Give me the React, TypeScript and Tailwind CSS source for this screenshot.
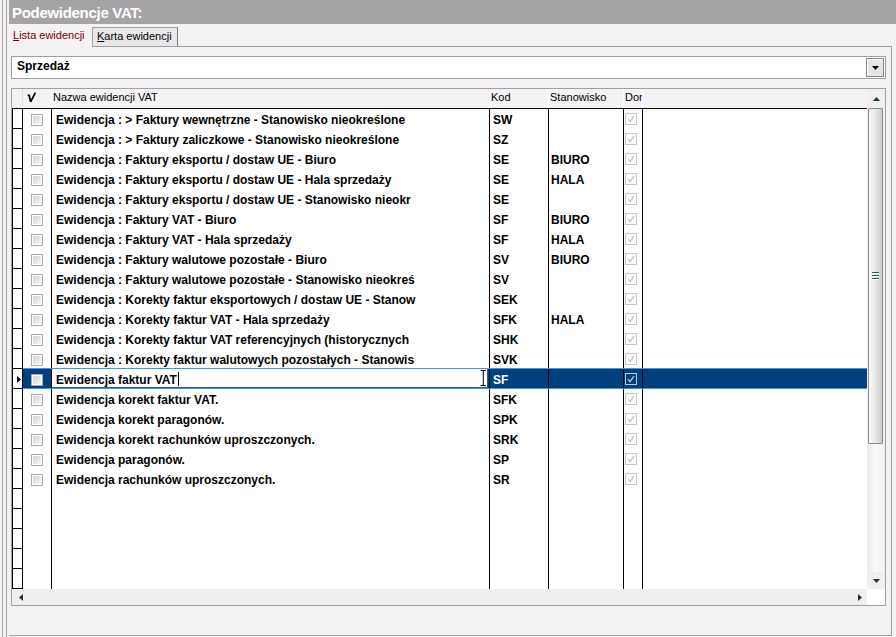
import React from "react";

type Row = { name: string; kod: string; stan: string };

const rows: Row[] = [
  { name: "Ewidencja : > Faktury wewnętrzne - Stanowisko nieokreślone", kod: "SW", stan: "" },
  { name: "Ewidencja : > Faktury zaliczkowe - Stanowisko nieokreślone", kod: "SZ", stan: "" },
  { name: "Ewidencja : Faktury eksportu / dostaw UE - Biuro", kod: "SE", stan: "BIURO" },
  { name: "Ewidencja : Faktury eksportu / dostaw UE - Hala sprzedaży", kod: "SE", stan: "HALA" },
  { name: "Ewidencja : Faktury eksportu / dostaw UE - Stanowisko nieokr", kod: "SE", stan: "" },
  { name: "Ewidencja : Faktury VAT - Biuro", kod: "SF", stan: "BIURO" },
  { name: "Ewidencja : Faktury VAT - Hala sprzedaży", kod: "SF", stan: "HALA" },
  { name: "Ewidencja : Faktury walutowe pozostałe - Biuro", kod: "SV", stan: "BIURO" },
  { name: "Ewidencja : Faktury walutowe pozostałe - Stanowisko nieokreś", kod: "SV", stan: "" },
  { name: "Ewidencja : Korekty faktur eksportowych / dostaw UE - Stanow", kod: "SEK", stan: "" },
  { name: "Ewidencja : Korekty faktur VAT - Hala sprzedaży", kod: "SFK", stan: "HALA" },
  { name: "Ewidencja : Korekty faktur VAT referencyjnych (historycznych", kod: "SHK", stan: "" },
  { name: "Ewidencja : Korekty faktur walutowych pozostałych - Stanowis", kod: "SVK", stan: "" },
  { name: "Ewidencja faktur VAT", kod: "SF", stan: "" },
  { name: "Ewidencja korekt faktur VAT.", kod: "SFK", stan: "" },
  { name: "Ewidencja korekt paragonów.", kod: "SPK", stan: "" },
  { name: "Ewidencja korekt rachunków uproszczonych.", kod: "SRK", stan: "" },
  { name: "Ewidencja paragonów.", kod: "SP", stan: "" },
  { name: "Ewidencja rachunków uproszczonych.", kod: "SR", stan: "" },
];

const SELECTED = 13;
const TOTAL_ROWS = 24;

function GrayBox() {
  return (
    <div className="w-[12px] h-[12px] border border-[#a9a9a9] bg-white p-[1px]">
      <div className="w-full h-full bg-linear-to-br from-[#d2d2d2] to-[#f7f7f7]" />
    </div>
  );
}

function DorBox() {
  return (
    <div className="w-[12px] h-[12px] border border-[#c6c6c6] flex items-center justify-center">
      <svg width="10" height="10" viewBox="0 0 10 10">
        <path d="M2 5.2 L4 7.6 L8 2.2" fill="none" stroke="#c4c4c4" strokeWidth="1.4" />
      </svg>
    </div>
  );
}

function GridRow({ row, index }: { row?: Row; index: number }) {
  const sel = index === SELECTED;
  const selBg = sel ? "bg-[#00407e]" : "";
  const txt = sel ? "text-white" : "text-black";
  return (
    <div className="flex h-[20px] relative">
      <div className="w-[11px] h-[20px] border-l border-r border-b border-black flex items-center justify-end pr-[1px]">
        {sel && (
          <svg width="4" height="7" viewBox="0 0 4 7" className="mt-[1px]">
            <path d="M0 0 L4 3.5 L0 7 Z" fill="#000" />
          </svg>
        )}
      </div>
      <div className={`w-[29px] h-[20px] border-r border-black pl-[8px] pt-[5px] ${selBg}`}>
        {row && <GrayBox />}
      </div>
      <div className={`w-[438px] h-[20px] border-r border-black overflow-hidden ${selBg}`}>
        {row && !sel && (
          <div className="pl-[4px] pt-[3px] leading-[16px] text-[12px] font-bold whitespace-nowrap text-black">
            {row.name}
          </div>
        )}
        {row && sel && (
          <div className="h-[19px] mr-[1px] bg-white border-r border-b border-[#1d6688] relative">
            <div className="pl-[4px] pt-[3px] leading-[16px] text-[12px] font-bold whitespace-nowrap text-black flex items-start">
              <span>{row.name}</span>
              <span className="inline-block w-[1px] h-[14px] bg-black ml-[1px] mt-[0px]" />
            </div>
            <svg width="7" height="17" viewBox="0 0 7 17" className="absolute right-[0px] top-[1px]">
              <path d="M0.5 0.5 H6 M3.3 0.5 V15.5 M0.5 15.5 H6" fill="none" stroke="#ffffff" strokeWidth="2.2" />
              <path d="M0.5 0.5 H6 M3.3 0.5 V15.5 M0.5 15.5 H6" fill="none" stroke="#000000" strokeWidth="1" />
            </svg>
          </div>
        )}
      </div>
      <div className={`w-[59px] h-[20px] border-r border-black pl-[3px] pt-[3px] leading-[16px] text-[12px] font-bold whitespace-nowrap overflow-hidden ${txt} ${selBg}`}>
        {row ? row.kod : ""}
      </div>
      <div className={`w-[75px] h-[20px] border-r border-black pl-[2px] pt-[3px] leading-[16px] text-[12px] font-bold whitespace-nowrap overflow-hidden ${txt} ${selBg}`}>
        {row ? row.stan : ""}
      </div>
      <div className={`w-[19px] h-[20px] border-r border-black pl-[1px] pt-[4px] ${selBg}`}>
        {row && <DorBox />}
      </div>
      <div className={`flex-1 h-[20px] ${selBg}`} />
      {sel && (
        <>
          <div className="absolute left-[11px] right-0 top-[-1px] h-[1px] bg-[#3b97e6]" />
          <div className="absolute left-[11px] right-0 bottom-0 h-[1px] bg-[#3b97e6]" />
        </>
      )}
    </div>
  );
}

export default function App() {
  const all = Array.from({ length: TOTAL_ROWS }, (_, i) => rows[i]);
  return (
    <div className="w-[896px] h-[637px] bg-[#f4f2f4] flex overflow-hidden font-['Liberation_Sans',Arial,sans-serif] text-black">
      {/* left frame */}
      <div className="w-[9px] h-full pl-[2px]">
        <div className="w-[5px] h-full border-l border-r border-[#a3a3a3]" />
      </div>
      {/* main */}
      <div className="flex-1 h-full flex flex-col">
        <div className="h-[24px] bg-[#a5a3a5] pl-[3px] pt-[1px] text-white font-bold text-[15px] leading-[24px] tracking-[-0.3px] whitespace-nowrap">
          Podewidencje VAT:
        </div>
        {/* tabs */}
        <div className="h-[23px] flex items-end mr-[4px]">
          <div className="w-[83px] h-full pl-[4px] pt-[4px] text-[11px] leading-[14px] text-[#800000] whitespace-nowrap">
            <span className="underline underline-offset-[1px]">L</span>ista ewidencji
          </div>
          <div className="w-[86px] h-[20px] border border-[#a0a0a0] border-r-[#7c7c7c] bg-[#e9e7e9] pl-[4px] pt-[1px] text-[11px] leading-[14px] whitespace-nowrap">
            <span className="underline underline-offset-[1px]">K</span>arta ewidencji
          </div>
          <div className="flex-1 h-full border-b border-[#a0a0a0]" />
        </div>
        {/* panel */}
        <div className="flex-1 mr-[4px] mb-[1px] border-r border-b border-[#a0a0a0] pl-[2px] pr-[5px] pt-[9px] flex flex-col">
          {/* combobox */}
          <div className="h-[23px] border border-[#a0a0a0] bg-white flex">
            <div className="flex-1 pl-[5px] text-[12px] font-bold leading-[19px]">Sprzedaż</div>
            <div className="w-[18px] h-[19px] mt-[1px] mr-[1px] border border-[#858585] bg-[#e6e6e6] shadow-[inset_1px_1px_0_#ffffff] flex items-center justify-center">
              <svg width="7" height="4" viewBox="0 0 7 4" className="mt-[1px]">
                <path d="M0 0 H7 L3.5 4 Z" fill="#000" />
              </svg>
            </div>
          </div>
          {/* grid */}
          <div className="mt-[9px] border border-[#a0a0a0] bg-white flex flex-col">
            <div className="flex">
              <div className="flex-1 flex flex-col">
                {/* header */}
                <div className="flex h-[20px] border-b border-black bg-[#f4f2f4] text-[11px] leading-[17px] whitespace-nowrap">
                  <div className="w-[11px] h-[19px] border-r border-[#e2e0e2]" />
                  <div className="w-[29px] h-[19px] border-r border-[#fcfcfc] pl-[4px] pt-[3px]">
                    <svg width="9" height="11" viewBox="0 0 9 11">
                      <path d="M0.6 3.6 L2.1 2.9 L3.6 9.8 L8.4 0.6" fill="none" stroke="#000" strokeWidth="1.7" strokeLinejoin="bevel" />
                    </svg>
                  </div>
                  <div className="w-[438px] h-[19px] border-r border-[#fcfcfc] pl-[1px]">Nazwa ewidencji VAT</div>
                  <div className="w-[59px] h-[19px] border-r border-[#fcfcfc] pl-[1px]">Kod</div>
                  <div className="w-[75px] h-[19px] border-r border-[#fcfcfc] pl-[1px]">Stanowisko</div>
                  <div className="w-[19px] h-[19px] border-r border-[#fcfcfc] pl-[1px] overflow-hidden">Dor</div>
                  <div className="flex-1 h-[19px]" />
                </div>
                {all.map((r, i) => (
                  <GridRow key={i} row={r} index={i} />
                ))}
              </div>
              {/* vertical scrollbar */}
              <div className="w-[18px] bg-[#f1eff1] flex flex-col">
                <div className="h-[19px] flex items-center justify-center">
                  <svg width="7" height="4" viewBox="0 0 7 4">
                    <path d="M3.5 0 L7 4 H0 Z" fill="#123c3c" />
                  </svg>
                </div>
                <div className="h-[336px] ml-[1px] w-[15px] border border-[#8c8c8c] rounded-[1px] bg-linear-to-r from-[#fafafa] via-[#e6e6e6] to-[#cbcbcb] flex flex-col items-center justify-center gap-[1px]">
                  <div className="w-[7px] h-[2px] bg-[#1e5f5f] border-b border-white" />
                  <div className="w-[7px] h-[2px] bg-[#1e5f5f] border-b border-white" />
                  <div className="w-[7px] h-[2px] bg-[#1e5f5f] border-b border-white" />
                </div>
                <div className="flex-1 bg-linear-to-r from-[#ebebeb] via-[#fafafa] to-[#f3eff3]" />
                <div className="h-[17px] flex items-center justify-center">
                  <svg width="7" height="4" viewBox="0 0 7 4">
                    <path d="M0 0 H7 L3.5 4 Z" fill="#123c3c" />
                  </svg>
                </div>
              </div>
            </div>
            {/* horizontal scrollbar */}
            <div className="flex h-[16px]">
              <div className="flex-1 bg-[#efefef] flex items-center justify-between pl-[7px] pr-[5px]">
                <svg width="4" height="7" viewBox="0 0 4 7">
                  <path d="M4 0 L0 3.5 L4 7 Z" fill="#123c3c" />
                </svg>
                <svg width="4" height="7" viewBox="0 0 4 7">
                  <path d="M0 0 L4 3.5 L0 7 Z" fill="#123c3c" />
                </svg>
              </div>
              <div className="w-[18px] bg-white" />
            </div>
          </div>
        </div>
      </div>
    </div>
  );
}
